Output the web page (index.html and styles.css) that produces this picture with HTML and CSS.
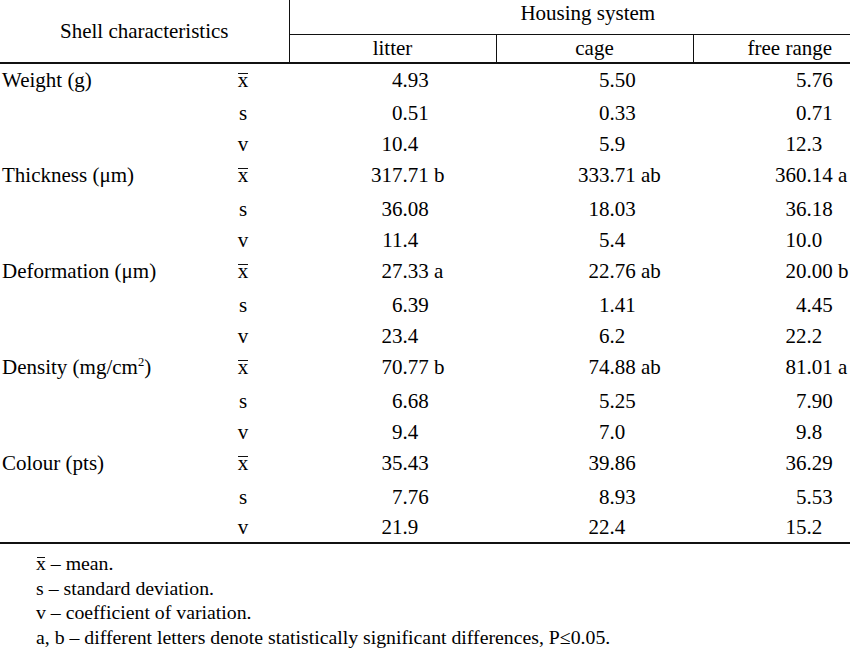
FILE: index.html
```html
<!DOCTYPE html>
<html>
<head>
<meta charset="utf-8">
<link rel="stylesheet" href="styles.css">
</head>
<body>
<div class="page">
<table class="t">
  <colgroup>
    <col class="c-label"><col class="c-stat"><col class="c-litter"><col class="c-cage"><col class="c-free">
  </colgroup>
  <thead>
    <tr class="h1">
      <th rowspan="2" colspan="2" class="shell">Shell characteristics</th>
      <th colspan="3" class="hs">Housing system</th>
    </tr>
    <tr class="h2">
      <th class="sub">litter</th><th class="sub">cage</th><th class="sub">free range</th>
    </tr>
  </thead>
  <tbody>
    <tr class="rm"><td class="lab">Weight (g)</td><td class="st"><span class="xbar">x</span></td><td class="num"><span class="i">4</span>.93</td><td class="num"><span class="i">5</span>.50</td><td class="num"><span class="i">5</span>.76</td></tr>
    <tr class="rs"><td></td><td class="st">s</td><td class="num"><span class="i">0</span>.51</td><td class="num"><span class="i">0</span>.33</td><td class="num"><span class="i">0</span>.71</td></tr>
    <tr class="rv"><td></td><td class="st">v</td><td class="num"><span class="i">10</span>.4</td><td class="num"><span class="i">5</span>.9</td><td class="num"><span class="i">12</span>.3</td></tr>

    <tr class="rm"><td class="lab">Thickness (μm)</td><td class="st"><span class="xbar">x</span></td><td class="num"><span class="i">317</span>.71 b</td><td class="num"><span class="i">333</span>.71 ab</td><td class="num"><span class="i">360</span>.14 a</td></tr>
    <tr class="rs"><td></td><td class="st">s</td><td class="num"><span class="i">36</span>.08</td><td class="num"><span class="i">18</span>.03</td><td class="num"><span class="i">36</span>.18</td></tr>
    <tr class="rv"><td></td><td class="st">v</td><td class="num"><span class="i">11</span>.4</td><td class="num"><span class="i">5</span>.4</td><td class="num"><span class="i">10</span>.0</td></tr>

    <tr class="rm"><td class="lab">Deformation (μm)</td><td class="st"><span class="xbar">x</span></td><td class="num"><span class="i">27</span>.33 a</td><td class="num"><span class="i">22</span>.76 ab</td><td class="num"><span class="i">20</span>.00 b</td></tr>
    <tr class="rs"><td></td><td class="st">s</td><td class="num"><span class="i">6</span>.39</td><td class="num"><span class="i">1</span>.41</td><td class="num"><span class="i">4</span>.45</td></tr>
    <tr class="rv"><td></td><td class="st">v</td><td class="num"><span class="i">23</span>.4</td><td class="num"><span class="i">6</span>.2</td><td class="num"><span class="i">22</span>.2</td></tr>

    <tr class="rm"><td class="lab">Density (mg/cm<sup>2</sup>)</td><td class="st"><span class="xbar">x</span></td><td class="num"><span class="i">70</span>.77 b</td><td class="num"><span class="i">74</span>.88 ab</td><td class="num"><span class="i">81</span>.01 a</td></tr>
    <tr class="rs"><td></td><td class="st">s</td><td class="num"><span class="i">6</span>.68</td><td class="num"><span class="i">5</span>.25</td><td class="num"><span class="i">7</span>.90</td></tr>
    <tr class="rv"><td></td><td class="st">v</td><td class="num"><span class="i">9</span>.4</td><td class="num"><span class="i">7</span>.0</td><td class="num"><span class="i">9</span>.8</td></tr>

    <tr class="rm"><td class="lab">Colour (pts)</td><td class="st"><span class="xbar">x</span></td><td class="num"><span class="i">35</span>.43</td><td class="num"><span class="i">39</span>.86</td><td class="num"><span class="i">36</span>.29</td></tr>
    <tr class="rs"><td></td><td class="st">s</td><td class="num"><span class="i">7</span>.76</td><td class="num"><span class="i">8</span>.93</td><td class="num"><span class="i">5</span>.53</td></tr>
    <tr class="rv last"><td></td><td class="st">v</td><td class="num"><span class="i">21</span>.9</td><td class="num"><span class="i">22</span>.4</td><td class="num"><span class="i">15</span>.2</td></tr>
  </tbody>
</table>
<div class="notes">
  <p><span class="xbar">x</span> – mean.</p>
  <p>s – standard deviation.</p>
  <p>v – coefficient of variation.</p>
  <p>a, b – different letters denote statistically significant differences, P≤0.05.</p>
</div>
</div>
</body>
</html>
```

FILE: styles.css
```css
html, body {
  margin: 0;
  padding: 0;
  background: #fff;
}
body {
  font-family: "Liberation Serif", "Times New Roman", serif;
  color: #000;
}
.page {
  width: 850px;
  height: 649px;
  overflow: hidden;
}
.t {
  border-collapse: collapse;
  table-layout: fixed;
  width: 886px;
  font-size: 21px;
}
.c-label { width: 230px; }
.c-stat { width: 59px; }
.c-litter { width: 207px; }
.c-cage { width: 197px; }
.c-free { width: 193px; }

.t th {
  font-weight: normal;
  padding: 0;
  line-height: 24px;
}
.h1 { height: 34px; }
.h2 { height: 29px; }
.shell {
  text-align: center;
  border-right: 1.5px solid #111;
  border-bottom: 2.5px solid #111;
  vertical-align: middle;
  padding-top: 2px;
}
.t th.hs {
  text-align: center;
  border-bottom: 1.5px solid #111;
  vertical-align: middle;
  padding-bottom: 8px;
}
.sub {
  text-align: center;
  border-left: 1.5px solid #111;
  border-bottom: 2.5px solid #111;
  vertical-align: middle;
}
.t td {
  padding: 0;
  line-height: 24px;
  vertical-align: middle;
  white-space: nowrap;
}
.rm { height: 34px; }
.rs { height: 31px; }
.rv { height: 31px; }
.t .rm td { padding-bottom: 2px; }
.last td { border-bottom: 2.5px solid #111; }
.t td.lab {
  padding-left: 2px;
}
.t td.st {
  text-align: center;
  padding-right: 33px;
}
.t td.num {
  padding-left: 82px;
}
.i {
  display: inline-block;
  width: 31.5px;
  text-align: right;
}
.xbar {
  position: relative;
}
.xbar::before {
  content: "";
  position: absolute;
  left: 0.03em;
  right: 0.03em;
  top: 0.24em;
  border-top: 1.5px solid #111;
}
sup {
  font-size: 0.6em;
  vertical-align: 0.6em;
  line-height: 0;
}
.notes {
  margin-top: 7px;
  padding-left: 36px;
  font-size: 19.8px;
  line-height: 24.5px;
}
.notes p {
  margin: 0;
}
```
